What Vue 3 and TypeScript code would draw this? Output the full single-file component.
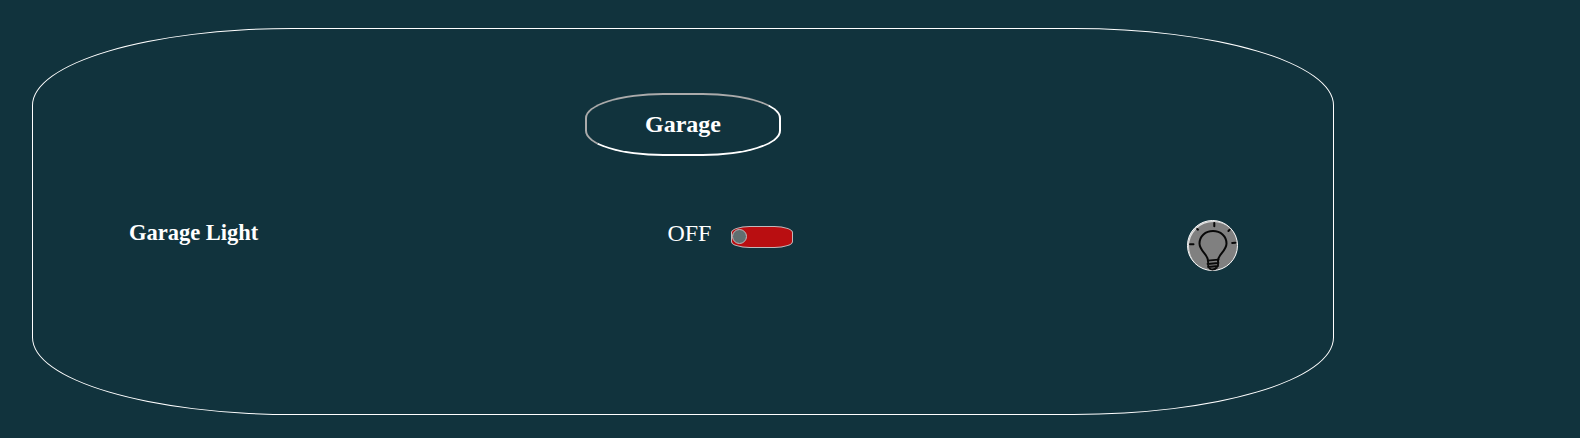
<script setup lang="ts">
import { ref } from 'vue'

const room = 'Garage'
const device = 'Garage Light'
const on = ref<boolean>(false)
</script>

<template>
  <main class="page">
    <section class="panel">
      <h2 class="title">{{ room }}</h2>
      <div class="row">
        <h3 class="device">{{ device }}</h3>
        <div class="control">
          <span class="state">{{ on ? 'ON' : 'OFF' }}</span>
          <div class="switch" :class="{ on }" role="switch" :aria-checked="on" @click="on = !on">
            <span class="knob"></span>
          </div>
        </div>
        <div class="lamp">
          <svg viewBox="0 0 51 51" fill="none" stroke="#080808" stroke-width="2" stroke-linecap="round" stroke-linejoin="round">
            <path d="M21 41 C21 34 12.5 31 12.5 23.5 C12.5 16 18.5 11 26 11 C33.5 11 39.5 16 39.5 23.5 C39.5 31 31 34 31 41" />
            <path d="M20.8 40.7 L31.5 39.7 M20.5 44 L31.5 43 M21 47 L31 46 M22.5 48.5 Q26.5 51 30 47.5 M21 40.5 L21.3 47 M31.2 39.7 L31 46" stroke-width="1.8" />
            <path d="M27.3 3 V6.2 M10.2 9 L11 9.7 M42.6 9.8 L41.4 11 M3 24.2 H6.5 M45.2 23 L48.4 22.7" />
          </svg>
        </div>
      </div>
    </section>
  </main>
</template>

<style scoped>
.page {
  box-sizing: border-box;
  height: 438px;
  padding: 28px 0 0 32px;
  color: #fff;
  font-family: "Liberation Serif", "Times New Roman", serif;
}
.panel {
  box-sizing: border-box;
  width: 1302px;
  height: 387px;
  padding-top: 64px;
  border: 1px solid #fff;
  border-radius: 20%;
}
.title {
  box-sizing: border-box;
  width: 196px;
  height: 63px;
  margin: 0 auto;
  border: 2px inset #fff;
  border-radius: 40%;
  font-size: 24px;
  line-height: 59px;
  text-align: center;
}
.row {
  display: flex;
  align-items: flex-start;
  margin: 64px 95px 0 96px;
}
.device {
  width: 538.4px;
  margin: 0;
  font-size: 22.5px;
  line-height: 26px;
}
.control {
  display: flex;
}
.state {
  width: 63.6px;
  font-size: 24px;
  line-height: 27px;
}
.switch {
  box-sizing: border-box;
  width: 62px;
  height: 22px;
  margin-top: 6px;
  padding-top: 2px;
  border: 1px solid #c0b8bb;
  border-radius: 30%;
  background: #b90e11;
}
.switch.on {
  background: #198b35;
}
.knob {
  display: block;
  box-sizing: border-box;
  width: 15px;
  height: 15px;
  border: 1px solid #c0b8bb;
  border-radius: 50%;
  background: #606e70;
}
.switch.on .knob {
  margin-left: auto;
}
.lamp {
  box-sizing: border-box;
  width: 51px;
  height: 51px;
  margin-left: auto;
  border: 1px solid #fff;
  border-radius: 50%;
  background: #808080;
  box-shadow: inset 1px 1px 0 #ddd;
}
.lamp svg {
  display: block;
  width: 51px;
  height: 51px;
  margin: -1px;
}
</style>

<style>
body {
  margin: 0;
  background: #11333d;
}
</style>
